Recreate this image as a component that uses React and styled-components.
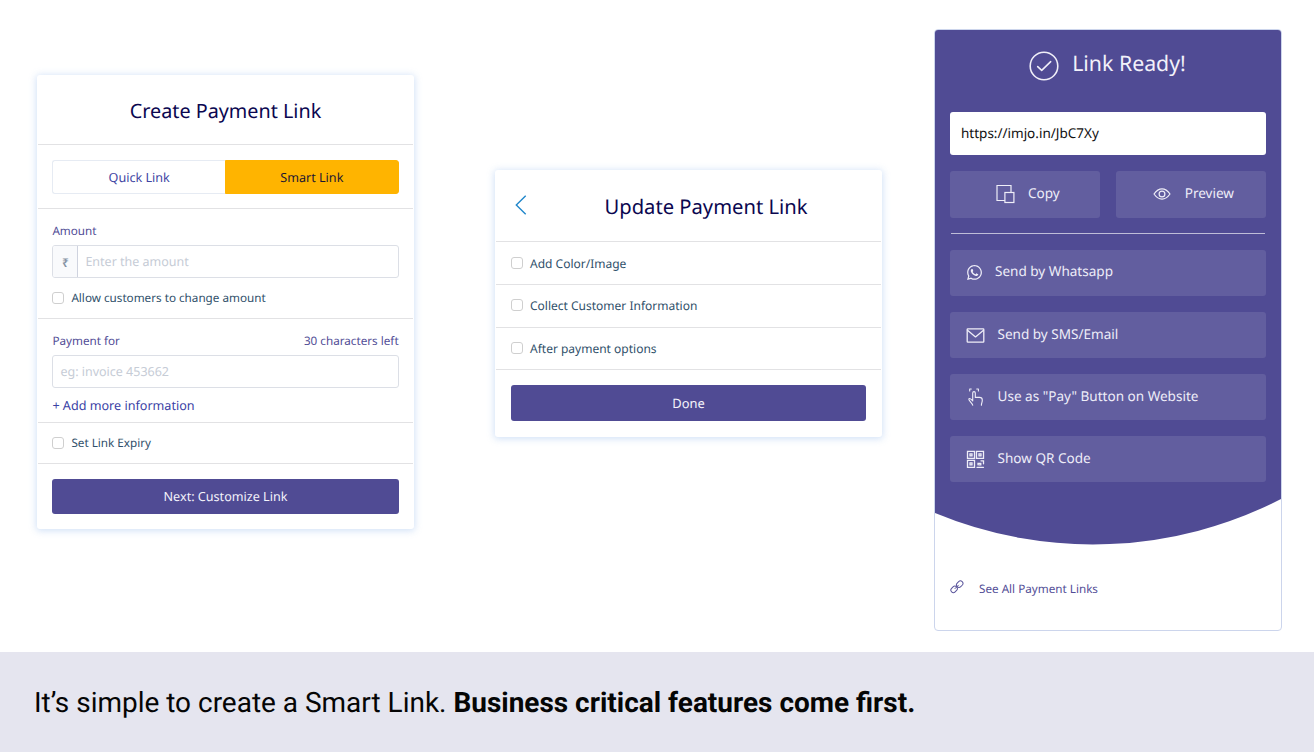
import React from 'react';
import styled, { createGlobalStyle } from 'styled-components';
import { FaWhatsapp } from 'react-icons/fa';

const Global = createGlobalStyle`
  * { box-sizing: border-box; }
  body { margin: 0; background: #fff; font-family: "Noto Sans", "Open Sans", sans-serif; text-rendering: geometricPrecision; }
  button, input { text-rendering: inherit; }
  svg { display: block; flex: none; }
`;

const Page = styled.div`
  width: 1314px;
  height: 752px;
  display: flex;
  flex-direction: column;
  overflow: hidden;
`;

const Stage = styled.main`
  height: 652px;
  display: flex;
  align-items: flex-start;
  padding-left: 37px;
`;

const Card = styled.section`
  width: ${p => p.$width}px;
  height: ${p => p.$height}px;
  margin-top: ${p => p.$top}px;
  margin-right: ${p => p.$gap}px;
  padding: 0 1px;
  background: #fff;
  border-radius: 3px;
  box-shadow: 0 1px 7px 1px rgba(150, 185, 235, 0.42);
`;

const Section = styled.div`
  height: ${p => p.$height}px;
  padding: ${p => p.$padTop || 0}px ${p => p.$side || 14.4}px 0;
  border-bottom: ${p => (p.$last ? 0 : 1)}px solid #e2e2e4;
`;

const CardHeader = styled(Section)`
  display: flex;
  align-items: center;
  padding: 0 19px;
`;

const BackIcon = styled.svg`
  margin-bottom: 2px;
`;

const Title = styled.h1`
  flex: 1;
  margin: 0;
  padding-top: ${p => p.$drop || 0}px;
  padding-left: ${p => p.$indent || 0}px;
  text-align: center;
  font-size: ${p => p.$size}px;
  line-height: 28px;
  font-weight: 400;
  color: #0b0750;
`;

const Segments = styled.div`
  height: 34px;
  display: flex;
`;

const Segment = styled.button`
  flex: 1;
  padding: 1px 0 0;
  border: 1px solid ${p => (p.$active ? '#ffb400' : '#e6ebf3')};
  border-radius: ${p => (p.$active ? '0 3px 3px 0' : '3px 0 0 3px')};
  border-right-width: ${p => (p.$active ? 1 : 0)}px;
  background: ${p => (p.$active ? '#ffb400' : '#fff')};
  color: ${p => (p.$active ? '#1b1632' : '#3f45a3')};
  font: 400 12.6px "Noto Sans", sans-serif;
`;

const LabelRow = styled.div`
  display: flex;
  justify-content: space-between;
  height: 22px;
  font-size: 11.7px;
  line-height: 17px;
  color: #524d96;
`;

const Field = styled.div`
  height: 33px;
  display: flex;
  align-items: center;
  border: 1px solid #dcdfe6;
  border-radius: 3px;
  overflow: hidden;
`;

const Prefix = styled.span`
  width: 25px;
  height: 31px;
  display: flex;
  align-items: center;
  justify-content: center;
  padding-top: 2px;
  border-right: 1px solid #cfd3df;
  background: #f9fafc;
  color: #8593a4;
  font-size: 12px;
  font-weight: 600;
`;

const Input = styled.input`
  flex: 1;
  min-width: 0;
  padding: 0 7px 1px;
  border: 0;
  outline: 0;
  background: transparent;
  font: 400 12.5px "Noto Sans", sans-serif;
  &::placeholder { color: #c6ccd6; opacity: 1; }
`;

const CheckLabel = styled.label`
  height: ${p => p.$height}px;
  display: flex;
  align-items: center;
  gap: 7px;
  font-size: ${p => p.$size}px;
  line-height: 17px;
  color: #30506a;
`;

const CheckBox = styled.input`
  appearance: none;
  width: 12px;
  height: 12px;
  margin: 0 0 1px;
  border: 1px solid #cfcfcf;
  border-radius: 3px;
  background: #fff;
`;

const TextLink = styled.div`
  padding-top: 9px;
  font-size: 12.6px;
  line-height: 18px;
  color: #3a41a5;
`;

const Primary = styled.button`
  width: 100%;
  height: ${p => p.$height}px;
  padding: 0 0 1px;
  border: 0;
  border-radius: 3px;
  background: #504b94;
  color: #f4f3fb;
  font: 400 ${p => p.$size}px "Noto Sans", sans-serif;
`;

const ReadyCard = styled.section`
  width: 348px;
  height: 602px;
  margin-top: 29px;
  border: 1px solid #ccd5ec;
  border-radius: 4px;
  overflow: hidden;
`;

const ReadyBody = styled.div`
  height: 468px;
  padding: 0 15px;
  background: #504b94;
`;

const ReadyTitle = styled.h1`
  height: 82px;
  margin: 0;
  display: flex;
  justify-content: center;
  gap: 13px;
  padding-top: 19px;
  padding-right: 1px;
  font-size: 21.3px;
  line-height: 30px;
  font-weight: 400;
  color: #f2f1fa;
  svg { margin-top: 2px; }
`;

const LinkField = styled.div`
  height: 43px;
  padding: 0 11px;
  border-radius: 3px;
  background: #fff;
  font-size: 13.5px;
  line-height: 43px;
  color: #111;
`;

const PairRow = styled.div`
  display: grid;
  grid-template-columns: 150px 150px;
  gap: 16px;
  margin-top: 16px;
`;

const Tile = styled.button`
  height: 46.5px;
  display: flex;
  align-items: center;
  padding: 0 0 0 ${p => p.$left}px;
  border: 0;
  border-radius: 3px;
  background: #625e9f;
  color: #eeedf8;
  font: 400 13.55px "Noto Sans", sans-serif;
  text-align: left;
`;

const TileIcon = styled.span`
  width: ${p => p.$width}px;
`;

const TileText = styled.span`
  padding-bottom: 3px;
`;

const Rule = styled.div`
  height: 1px;
  margin: 15.5px 1px 15.7px;
  background: #bfbdd8;
`;

const Stack = styled.div`
  display: flex;
  flex-direction: column;
  gap: 15.6px;
`;

const AllLinks = styled.a`
  display: flex;
  padding: 36px 15px 0;
  gap: 15px;
  font-size: 11.7px;
  line-height: 17px;
  color: #524d96;
  svg { margin-top: -1.5px; }
`;

const Caption = styled.footer`
  height: 100px;
  padding-left: 34px;
  background: #e5e5ef;
  font-family: Roboto, sans-serif;
  font-size: 27.97px;
  line-height: 101px;
  color: #050505;
  white-space: nowrap;
`;

const Strong = styled.strong`
  font-weight: 700;
`;

const CheckRow = ({ children, height, size = 11.7 }) => (
  <CheckLabel $height={height} $size={size}>
    <CheckBox type="checkbox" />
    {children}
  </CheckLabel>
);

const line = { fill: 'none', stroke: '#efeef8', strokeLinecap: 'round', strokeLinejoin: 'round' };

const CopyIcon = () => (
  <svg width="20" height="20" viewBox="0 0 20 20" {...line} strokeWidth="1.2" strokeLinejoin="miter">
    <path d="M9.500 16.500H2V1.500H16V8" />
    <rect x="9.900" y="8.500" width="9" height="10" />
  </svg>
);

const EyeIcon = () => (
  <svg width="18" height="14" viewBox="0 0 18 14" {...line} strokeWidth="1.2">
    <path d="M1 7C3.500 3.500 6 1.900 9 1.900S14.500 3.500 17 7C14.500 10.500 12 12.100 9 12.100S3.500 10.500 1 7Z" />
    <circle cx="9" cy="7" r="2.900" />
  </svg>
);

const MailIcon = () => (
  <svg width="19" height="15" viewBox="-.5 0 19 15" {...line} strokeWidth="1.3">
    <rect x=".7" y=".9" width="16.600" height="13.200" rx=".6" />
    <path d="M1 2.300L9 8.900L17 2.300" />
  </svg>
);

const TapIcon = () => (
  <svg width="19" height="19" viewBox="-.5 .3 19 19" {...line} strokeWidth="1.1">
    <path d="M6.200 17.500C6 15.600 2.200 13 2.300 11.300C3 10 4.800 11.700 6.200 13.300V5.300C6.200 3.400 8.800 3.400 8.800 5.300V9.700H13C14.900 9.700 15.800 10.700 15.800 12.300C15.800 14.500 14.900 15.800 14.900 17.500" />
    <path d="M3.200 3.300V1.300H4.800M10.200 1.300H11.900V3.300" />
  </svg>
);

const QrIcon = () => (
  <svg width="19" height="18" viewBox="-.5 -.3 19 18" {...line} strokeWidth="1.3" strokeLinejoin="miter">
    <path d="M1 1H8V8H1ZM10 1H17V8H10ZM1 10H8V17H1Z" />
    <path d="M3.500 3.500H5.500V5.500H3.500ZM12.500 3.500H14.500V5.500H12.500ZM3.500 12.500H5.500V14.500H3.500Z" />
    <path d="M10.500 17H17M14.500 10.500H17V13.500M11.500 14.500V13H14.300V14.500H12.500" />
  </svg>
);

const ChainIcon = () => (
  <svg width="14" height="14" viewBox="0 0 14 14" fill="none" stroke="#5b569c" strokeWidth="1">
    <rect x="-3.500" y="-2.500" width="7" height="5" rx="2.500" transform="translate(4.100 9.400) rotate(-45)" />
    <rect x="-3.500" y="-2.500" width="7" height="5" rx="2.500" transform="translate(9.700 4.200) rotate(-45)" />
    <path d="M4.700 8.900L8.700 4.900" />
  </svg>
);

const shareOptions = [
  { text: 'Send by Whatsapp', icon: <FaWhatsapp size={17} />, width: 29 },
  { text: 'Send by SMS/Email', icon: <MailIcon />, width: 31.5 },
  { text: 'Use as "Pay" Button on Website', icon: <TapIcon />, width: 31.5 },
  { text: 'Show QR Code', icon: <QrIcon />, width: 31.5 },
];

export default function App() {
  return (
    <Page>
      <Global />
      <Stage>
        <Card $width={377} $height={454} $top={75} $gap={81}>
          <CardHeader $height={70}>
            <Title $size={19.8} $drop={3}>Create Payment Link</Title>
          </CardHeader>
          <Section $height={64} $padTop={15}>
            <Segments>
              <Segment>Quick Link</Segment>
              <Segment $active>Smart Link</Segment>
            </Segments>
          </Section>
          <Section $height={110} $padTop={14}>
            <LabelRow>Amount</LabelRow>
            <Field>
              <Prefix>₹</Prefix>
              <Input placeholder="Enter the amount" />
            </Field>
            <CheckRow height={40}>Allow customers to change amount</CheckRow>
          </Section>
          <Section $height={104} $padTop={14}>
            <LabelRow><span>Payment for</span><span>30 characters left</span></LabelRow>
            <Field><Input placeholder="eg: invoice 453662" /></Field>
            <TextLink>+ Add more information</TextLink>
          </Section>
          <Section $height={41}>
            <CheckRow height={41}>Set Link Expiry</CheckRow>
          </Section>
          <Section $height={65} $padTop={15} $last>
            <Primary $height={35} $size={12.6}>Next: Customize Link</Primary>
          </Section>
        </Card>

        <Card $width={387} $height={267} $top={170} $gap={52}>
          <CardHeader $height={72}>
            <BackIcon width="12" height="20" viewBox="0 0 12 20" fill="none" stroke="#2187cb" strokeWidth="1.400">
              <path d="M10.700 .7L1.300 10L10.700 19.300" />
            </BackIcon>
            <Title $size={20.2} $indent={23} $drop={0}>Update Payment Link</Title>
          </CardHeader>
          <Section $height={43} $side={15}><CheckRow height={42} size={12}>Add Color/Image</CheckRow></Section>
          <Section $height={43} $side={15}><CheckRow height={41} size={12}>Collect Customer Information</CheckRow></Section>
          <Section $height={42} $side={15}><CheckRow height={41} size={12}>After payment options</CheckRow></Section>
          <Section $height={67} $side={15} $padTop={15} $last>
            <Primary $height={36} $size={12.9}>Done</Primary>
          </Section>
        </Card>

        <ReadyCard>
          <ReadyBody>
            <ReadyTitle>
              <svg width="30" height="30" viewBox="0 0 30 30" {...line} strokeWidth="1.600">
                <circle cx="15" cy="15" r="13.800" />
                <path d="M8.700 15.600L12.700 19.300L21.700 10.700" />
              </svg>
              Link Ready!
            </ReadyTitle>
            <LinkField>https://imjo.in/JbC7Xy</LinkField>
            <PairRow>
              <Tile $left={45}>
                <TileIcon $width={33}><CopyIcon /></TileIcon>
                <TileText>Copy</TileText>
              </Tile>
              <Tile $left={37}>
                <TileIcon $width={31.7}><EyeIcon /></TileIcon>
                <TileText>Preview</TileText>
              </Tile>
            </PairRow>
            <Rule />
            <Stack>
              {shareOptions.map(o => (
                <Tile key={o.text} $left={16}>
                  <TileIcon $width={o.width}>{o.icon}</TileIcon>
                  <TileText>{o.text}</TileText>
                </Tile>
              ))}
            </Stack>
          </ReadyBody>
          <svg width="346" height="47" viewBox="0 0 346 47" fill="#504b94">
            <path d="M0 0H346V1A412 412 0 0 1 0 15Z" />
          </svg>
          <AllLinks><ChainIcon />See All Payment Links</AllLinks>
        </ReadyCard>
      </Stage>
      <Caption>
        It’s simple to create a Smart Link. <Strong>Business critical features come first.</Strong>
      </Caption>
    </Page>
  );
}
